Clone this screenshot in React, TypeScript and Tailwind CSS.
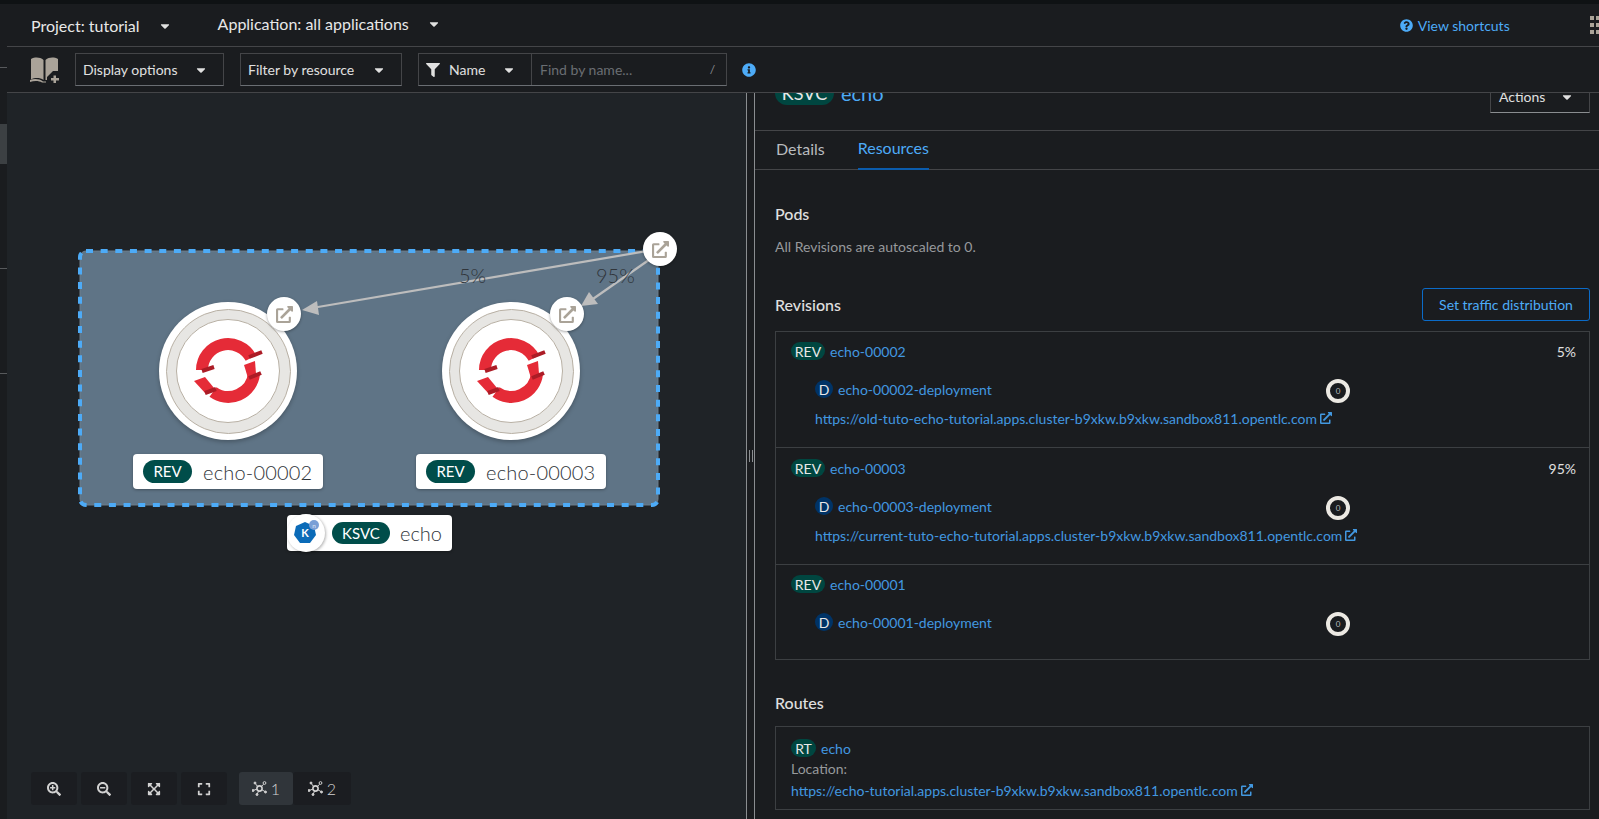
import React from "react"
import {
  FaCaretDown,
  FaExternalLinkAlt,
  FaFilter,
  FaInfoCircle,
  FaQuestionCircle,
  FaSearchMinus,
  FaSearchPlus,
  FaExpand,
  FaExpandArrowsAlt,
} from "react-icons/fa"

const font = "font-['Lato','Liberation_Sans',sans-serif]"

function Caret({ className = "" }: { className?: string }) {
  return <FaCaretDown className={"text-[14px] text-[#e0e0e0] " + className} />
}

function Badge({ label, className = "" }: { label: string; className?: string }) {
  return (
    <span className={"flex h-[18px] items-center justify-center rounded-[9px] text-[14px] text-[#e8e8e8] " + className}>
      {label}
    </span>
  )
}

function BookIcon() {
  return (
    <svg width="30" height="27" viewBox="0 0 30 27" className="-mt-[1px] ml-[23px] mr-[15px] shrink-0">
      <path d="M1 3 C5 1 10 1 13.5 4 V24 C10 21.5 5 21.5 1 23.5 Z" fill="#aaa399" />
      <path d="M15.5 4 C19 1 24 1 28 3 V15 H23 L17 21 V24 L15.5 24 Z" fill="#aaa399" />
      <path d="M0 24 C4 22.5 9 22.5 13 25.5 H16 L16 26.5 H12 C9 24.5 4 24.5 0 26 Z" fill="#aaa399" />
      <path d="M21 22 H23.5 V19.5 H26 V22 H29 V24.5 H26 V27 H23.5 V24.5 H21 Z" fill="#aaa399" />
    </svg>
  )
}

function TopologyIcon() {
  return (
    <svg width="15" height="15" viewBox="0 0 15 15" fill="none" stroke="#d2d2d2" strokeWidth="1">
      <circle cx="7.5" cy="7.5" r="2.6" strokeWidth="1.6" />
      <circle cx="12.5" cy="2" r="1.4" />
      <circle cx="3" cy="2" r="1" fill="#d2d2d2" />
      <circle cx="1" cy="9.5" r="1" fill="#d2d2d2" />
      <circle cx="13.5" cy="11" r="1" fill="#d2d2d2" />
      <circle cx="5" cy="13.5" r="1" fill="#d2d2d2" />
      <path d="M9.4 5.6 L11.6 3.2 M5.6 5.6 L3.4 2.6 M5 8 L1.6 9.3 M10 8.8 L13 10.6 M6.6 10 L5.3 13" />
    </svg>
  )
}

function OpenShiftLogo() {
  return (
    <svg width="76" height="76" viewBox="-38 -38 76 76" className="shrink-0">
      <g fill="none" stroke="#e52b37" strokeWidth="12">
        <path d="M-26 -1 A26 26 0 0 1 23 -13" />
        <path d="M26 3 A26 26 0 0 1 -15 21" />
      </g>
      <polygon points="-34,10 -23,6 -14,17 -22,23" fill="#e52b37" />
      <polygon points="16,-6 27,-10 28,3 20,7" fill="#e52b37" />
      <g stroke="#ac1c26" strokeWidth="4">
        <path d="M21 -14 L34 -19" />
        <path d="M-26 0 L-14 -4" />
        <path d="M-23 22 L-12 18" />
        <path d="M21 7 L33 2" />
      </g>
    </svg>
  )
}

function Decorator({ className }: { className: string }) {
  return (
    <div className={"absolute flex h-[34px] w-[34px] items-center justify-center rounded-full bg-white shadow-[0_1px_3px_rgba(0,0,0,0.35)] " + className}>
      <FaExternalLinkAlt className="text-[17px] text-[#aaa398]" />
    </div>
  )
}

function RevisionNode({ className, name }: { className: string; name: string }) {
  return (
    <div className={"absolute flex w-[190px] flex-col items-center " + className}>
      <div className="flex h-[138px] w-[138px] items-center justify-center rounded-full bg-white shadow-[0_2px_4px_rgba(0,0,0,0.25)]">
        <div className="flex h-[125px] w-[125px] items-center justify-center rounded-full border border-[#b8b0a4] bg-[#e7e6e3]">
          <div className="flex h-[104px] w-[104px] items-center justify-center rounded-full border border-[#b8b0a4] bg-white">
            <OpenShiftLogo />
          </div>
        </div>
      </div>
      <div className="mt-[14px] flex h-[35px] w-[190px] items-center rounded-[4px] bg-white pl-[10px] shadow-[0_1px_3px_rgba(0,0,0,0.3)]">
        <span className="flex h-[23px] w-[49px] items-center justify-center rounded-full bg-[#004d4a] text-[15px] text-white">REV</span>
        <span className="ml-[11px] text-[20px] font-light tracking-[0.2px] text-[#30353a]">{name}</span>
      </div>
    </div>
  )
}

function ToolButton({ children, className = "" }: { children: React.ReactNode; className?: string }) {
  return (
    <div className={"flex h-[33px] w-[46px] items-center justify-center rounded-[3px] bg-[#1b1d21] text-[14px] text-[#d2d2d2] " + className}>
      {children}
    </div>
  )
}

function Donut() {
  return (
    <div className="mt-[3px] flex h-[24px] w-[24px] shrink-0 items-center justify-center rounded-full border-[4px] border-[#ece9e3] text-[8px] text-[#b8bbbe]">
      0
    </div>
  )
}

function ExternalUrl({ href, className = "" }: { href: string; className?: string }) {
  return (
    <div className={"flex h-[20px] items-center text-[14px] text-[#4298e0] " + className}>
      {href}
      <FaExternalLinkAlt className="ml-[3px] text-[12px]" />
    </div>
  )
}

function RevisionRow({
  name,
  percent,
  url,
  className,
}: {
  name: string
  percent?: string
  url?: string
  className: string
}) {
  return (
    <div className={"border-[#3c3f42] pl-[15px] pr-[13px] " + className}>
      <div className="flex h-[20px] items-center">
        <Badge label="REV" className="w-[34px] bg-[#004640]" />
        <span className="ml-[5px] text-[14px] text-[#4298e0]">{name}</span>
        <span className="ml-auto text-[14px] text-[#e0e0e0]">{percent}</span>
      </div>
      <div className="ml-[24px] mt-[18px] flex h-[20px] items-center">
        <Badge label="D" className="w-[18px] bg-[#003366]" />
        <span className="ml-[5px] w-[488px] text-[14px] text-[#4298e0]">{name}-deployment</span>
        <Donut />
      </div>
      {url && <ExternalUrl href={url} className="ml-[24px] mt-[9px]" />}
    </div>
  )
}

export default function App() {
  return (
    <div className={"flex h-[819px] w-[1599px] flex-col overflow-hidden bg-[#1a1c1f] " + font}>
      <div className="h-[4px] shrink-0 bg-[#0f1214]" />
      <div className="flex min-h-0 flex-1">
        {/* collapsed nav */}
        <div className="relative w-[7px] shrink-0 bg-[#1a1c1f]">
          <div className="absolute left-0 top-[63px] h-px w-full bg-[#57595c]" />
          <div className="absolute left-0 top-[120px] h-[40px] w-full bg-[#3c4043]" />
          <div className="absolute left-0 top-[264px] h-px w-full bg-[#57595c]" />
          <div className="absolute left-0 top-[369px] h-px w-full bg-[#57595c]" />
        </div>

        <div className="flex min-w-0 flex-1 flex-col">
          <div className="flex h-[43px] shrink-0 items-center border-b border-[#444548] text-[16px] text-[#e8e8e8]">
            <span className="ml-[24px] mt-[1px]">Project: tutorial</span>
            <Caret className="ml-[18px] mt-[1px]" />
            <span className="ml-[46px] -mt-[3px]">Application: all applications</span>
            <Caret className="ml-[18px] -mt-[3px]" />
            <FaQuestionCircle className="ml-[959px] text-[13px] text-[#4dabf7]" />
            <span className="ml-[5px] text-[14px] text-[#4dabf7]">View shortcuts</span>
            <svg width="9" height="18" viewBox="0 0 9 18" className="ml-auto" fill="#aaa398">
              <rect x="0" y="0" width="4" height="4" />
              <rect x="6" y="0" width="4" height="4" />
              <rect x="0" y="7" width="4" height="4" />
              <rect x="6" y="7" width="4" height="4" />
              <rect x="0" y="14" width="4" height="4" />
              <rect x="6" y="14" width="4" height="4" />
            </svg>
          </div>

          <div className="flex h-[46px] shrink-0 items-center border-b border-[#444548] text-[14px] text-[#e0e0e0]">
            <BookIcon />
            <div className="flex h-[33px] w-[149px] items-center border border-[#444548] border-b-[#6a6e73] pl-[7px]">
              Display options
              <Caret className="ml-auto mr-[15px]" />
            </div>
            <div className="ml-[16px] flex h-[33px] w-[162px] items-center border border-[#444548] border-b-[#6a6e73] pl-[7px]">
              Filter by resource
              <Caret className="ml-auto mr-[15px]" />
            </div>
            <div className="ml-[16px] flex h-[33px] w-[309px] items-center border border-[#444548] border-b-[#6a6e73]">
              <div className="flex h-full w-[113px] items-center border-r border-[#444548] pl-[7px]">
                <FaFilter className="text-[14px] text-[#e0e0e0]" />
                <span className="ml-[9px]">Name</span>
                <Caret className="ml-auto mr-[15px]" />
              </div>
              <span className="ml-[8px] text-[#6a6e73]">Find by name...</span>
              <span className="ml-auto mr-[6px] flex h-[18px] w-[15px] items-center justify-center rounded-[2px] text-[12px] text-[#8a8d90]">/</span>
            </div>
            <FaInfoCircle className="ml-[15px] text-[14px] text-[#4dabf7]" />
          </div>

          <div className="flex min-h-0 flex-1">
            {/* topology canvas */}
            <div className="relative w-[739px] shrink-0 overflow-hidden bg-[#1f2327]">
              <div className="absolute left-[71px] top-[156px] h-[258px] w-[582px]">
                <svg width="582" height="258" className="absolute inset-0">
                  <rect x="2" y="2" width="578" height="254" rx="6" fill="#5f7486" stroke="#6f7f8c" strokeWidth="1" />
                  <rect x="2" y="2" width="578" height="254" rx="6" fill="none" stroke="#4dabf7" strokeWidth="4" strokeDasharray="7 7.65" />
                  <line x1="581" y1="0" x2="234" y2="59" stroke="#bdbdbd" strokeWidth="2.2" />
                  <polygon points="224,61 239,52 241,66" fill="#bdbdbd" />
                  <line x1="578" y1="6" x2="512" y2="52" stroke="#bdbdbd" strokeWidth="2.2" />
                  <polygon points="503,57 511,43 520,55" fill="#bdbdbd" />
                </svg>
                <span className="absolute left-[381px] top-[14px] text-[20px] font-light leading-[24px] text-[#30353a]">5%</span>
                <span className="absolute left-[518px] top-[14px] text-[20px] font-light leading-[24px] text-[#30353a]">95%</span>
                <RevisionNode className="left-[55px] top-[53px]" name="echo-00002" />
                <RevisionNode className="left-[338px] top-[53px]" name="echo-00003" />
                <Decorator className="left-[189px] top-[48px]" />
                <Decorator className="left-[472px] top-[48px]" />
                <Decorator className="left-[565px] top-[-17px]" />
              </div>

              <div className="absolute left-[280px] top-[422px] flex h-[36px] w-[165px] items-center rounded-[4px] bg-white pl-[45px] shadow-[0_1px_3px_rgba(0,0,0,0.3)]">
                <span className="flex h-[22px] w-[58px] items-center justify-center rounded-full bg-[#004d4a] text-[15px] text-white">KSVC</span>
                <span className="ml-[10px] text-[20px] font-light text-[#30353a]">echo</span>
              </div>
              <div className="absolute left-[280px] top-[421px] flex h-[38px] w-[38px] items-center justify-center rounded-full bg-white shadow-[1px_1px_3px_rgba(0,0,0,0.3)]">
                <svg width="30" height="30" viewBox="0 0 30 30">
                  <polygon points="14,4 23,8 25,17 19,25 9,25 3,17 5,8" fill="#0b6bb8" />
                  <text x="14" y="19" textAnchor="middle" fontSize="11" fontWeight="700" fill="#fff" fontFamily="Lato, sans-serif">K</text>
                  <circle cx="23" cy="7" r="5" fill="#7a9fd6" />
                  <text x="23" y="9.5" textAnchor="middle" fontSize="6.5" fill="#dfe8f5" fontFamily="Lato, sans-serif">n</text>
                </svg>
              </div>

              <div className="absolute bottom-[14px] left-[24px] flex">
                <div className="flex gap-[4px]">
                  <ToolButton><FaSearchPlus /></ToolButton>
                  <ToolButton><FaSearchMinus /></ToolButton>
                  <ToolButton><FaExpandArrowsAlt /></ToolButton>
                  <ToolButton><FaExpand /></ToolButton>
                </div>
                <ToolButton className="ml-[12px] w-[54px] gap-[4px] bg-[#30353a] text-[16px] font-light">
                  <TopologyIcon />1
                </ToolButton>
                <ToolButton className="w-[58px] gap-[4px] text-[16px] font-light">
                  <TopologyIcon />2
                </ToolButton>
              </div>
            </div>

            {/* drag gutter */}
            <div className="flex w-[9px] shrink-0 items-center justify-center gap-[2px] border-x border-[#8a8d90] bg-[#1a1c1f]">
              <div className="h-[12px] w-px bg-[#8a8d90]" />
              <div className="h-[12px] w-px bg-[#8a8d90]" />
            </div>

            {/* side panel */}
            <div className="min-w-0 flex-1 overflow-hidden text-[#e0e0e0]">
              <div className="flex h-[38px] overflow-hidden border-b border-[#444548] pl-[20px] pr-[9px]">
                <span className="-mt-[12px] flex h-[24px] w-[59px] items-center justify-center rounded-[12px] bg-[#004640] text-[18px] text-[#e8e8e8]">KSVC</span>
                <span className="-mt-[14px] ml-[7px] text-[20px] leading-[28px] text-[#4dabf7]">echo</span>
                <div className="-mt-[13px] ml-auto flex h-[33px] w-[100px] items-center border border-[#444548] border-b-[#8a8d90] pl-[8px] text-[14px]">
                  Actions
                  <Caret className="ml-auto mr-[15px]" />
                </div>
              </div>

              <div className="flex h-[39px] border-b border-[#444548] pl-[21px] text-[16px] font-normal">
                <div className="flex h-[39px] items-center pb-[3px] text-[#b8bbbe]">Details</div>
                <div className="ml-[33px] flex h-[39px] items-center border-b-[2px] border-[#0b5cad] pb-[3px] text-[#4dabf7]">Resources</div>
              </div>

              <div className="pl-[20px] pr-[9px]">
                <h2 className="mt-[32px] text-[16px] font-medium leading-[24px]">Pods</h2>
                <p className="mt-[10px] text-[14px] leading-[21px] text-[#97999c]">All Revisions are autoscaled to 0.</p>

                <div className="mt-[31px] flex h-[33px] items-center justify-between">
                  <h2 className="text-[16px] font-medium">Revisions</h2>
                  <div className="flex h-[33px] w-[168px] items-center justify-center rounded-[3px] border border-[#0b6bc8] text-[14px] text-[#4dabf7]">
                    Set traffic distribution
                  </div>
                </div>

                <div className="mt-[10px] border border-[#3c3f42]">
                  <RevisionRow
                    className="h-[116px] border-b pt-[9px]"
                    name="echo-00002"
                    percent="5%"
                    url="https://old-tuto-echo-tutorial.apps.cluster-b9xkw.b9xkw.sandbox811.opentlc.com"
                  />
                  <RevisionRow
                    className="h-[117px] border-b pt-[10px]"
                    name="echo-00003"
                    percent="95%"
                    url="https://current-tuto-echo-tutorial.apps.cluster-b9xkw.b9xkw.sandbox811.opentlc.com"
                  />
                  <RevisionRow className="h-[94px] pt-[9px]" name="echo-00001" />
                </div>

                <h2 className="mt-[31px] text-[16px] font-medium leading-[24px]">Routes</h2>
                <div className="mt-[11px] h-[84px] border border-[#3c3f42] pl-[15px] pt-[11px]">
                  <div className="flex h-[20px] items-center">
                    <Badge label="RT" className="w-[25px] bg-[#004640]" />
                    <span className="ml-[5px] text-[14px] text-[#4298e0]">echo</span>
                  </div>
                  <div className="h-[21px] text-[14px] leading-[21px] text-[#97999c]">Location:</div>
                  <ExternalUrl href="https://echo-tutorial.apps.cluster-b9xkw.b9xkw.sandbox811.opentlc.com" className="mt-[1px]" />
                </div>
              </div>
            </div>
          </div>
        </div>
      </div>
    </div>
  )
}
